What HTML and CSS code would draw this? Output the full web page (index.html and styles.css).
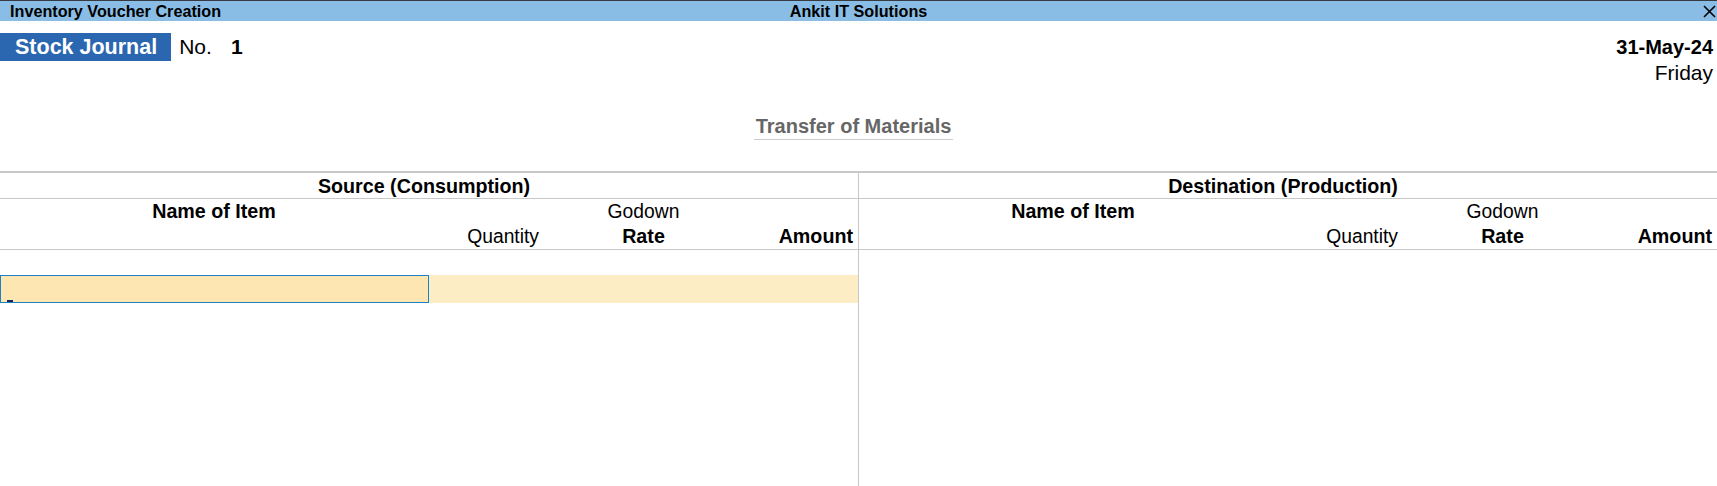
FILE: index.html
```html
<!DOCTYPE html>
<html lang="en">
<head>
    <meta charset="UTF-8">
    <meta name="viewport" content="width=device-width, initial-scale=1.0">
    <title>Inventory Voucher Creation</title>
    <link rel="stylesheet" href="styles.css">
</head>
<body>
    <div class="title-bar">
        <span class="title-left">Inventory Voucher Creation</span>
        <span class="title-center">Ankit IT Solutions</span>
        <span class="title-right">
            <svg class="close-icon" width="13" height="13" viewBox="0 0 13 13">
                <path d="M1 1L12 12M12 1L1 12" stroke="#000" stroke-width="1.6" fill="none"></path>
            </svg>
        </span>
    </div>

    <div class="voucher-head">
        <div class="voucher-type">
            <span class="badge">Stock Journal</span>
            <span class="voucher-no-label">No.</span>
            <span class="voucher-no">1</span>
        </div>
        <div class="voucher-date">
            <div class="date">31-May-24</div>
            <div class="day">Friday</div>
        </div>
    </div>

    <div class="voucher-title">
        <span>Transfer of Materials</span>
    </div>

    <div class="journal">
        <div class="side">
            <div class="side-title">Source (Consumption)</div>
            <div class="cols">
                <div class="col col-name">Name of Item</div>
                <div class="col col-qty"><br>Quantity</div>
                <div class="col col-rate">Godown<br><b>Rate</b></div>
                <div class="col col-amt"><br><b>Amount</b></div>
            </div>
            <div class="entry-row">
                <div class="entry-name"><span class="cursor"></span></div>
                <div class="entry-rest"></div>
            </div>
        </div>
        <div class="side side-right">
            <div class="side-title">Destination (Production)</div>
            <div class="cols">
                <div class="col col-name">Name of Item</div>
                <div class="col col-qty"><br>Quantity</div>
                <div class="col col-rate">Godown<br><b>Rate</b></div>
                <div class="col col-amt"><br><b>Amount</b></div>
            </div>
        </div>
    </div>
</body>
</html>
```

FILE: styles.css
```css
html, body {
    height: 100%;
}

body {
    font-family: 'Liberation Sans', Arial, sans-serif;
    margin: 0;
    padding: 0;
    color: #000;
    background: #fff;
    display: flex;
    flex-direction: column;
    overflow: hidden;
}

.title-bar {
    display: grid;
    grid-template-columns: 1fr auto 1fr;
    align-items: center;
    height: 20px;
    line-height: 20px;
    background-color: #8abde5;
    border-top: 1px solid #353b40;
    font-size: 16.2px;
    font-weight: bold;
}

.title-left {
    padding-left: 10px;
}

.title-right {
    display: flex;
    justify-content: flex-end;
    padding-right: 1px;
}

.close-icon {
    display: block;
}

.voucher-head {
    display: flex;
    justify-content: space-between;
    align-items: flex-start;
    padding-top: 12px;
}

.voucher-type {
    display: flex;
    align-items: center;
    height: 28px;
    font-size: 21px;
}

.badge {
    background-color: #2b67b1;
    color: #fff;
    font-size: 21.5px;
    font-weight: bold;
    line-height: 28px;
    padding: 0 14px 0 15px;
}

.voucher-no-label {
    margin-left: 8px;
}

.voucher-no {
    margin-left: 19px;
    font-weight: bold;
}

.voucher-date {
    text-align: right;
    padding-top: 2px;
    padding-right: 4px;
}

.date {
    font-size: 20px;
    font-weight: bold;
    line-height: 24px;
}

.day {
    font-size: 21px;
    line-height: 28px;
}

.voucher-title {
    display: flex;
    justify-content: center;
    margin-top: 28px;
    padding-right: 10px;
}

.voucher-title span {
    font-size: 20px;
    font-weight: bold;
    line-height: 22px;
    color: #666;
    padding: 0 2px 2px;
    border-bottom: 1px solid #cccccc;
}

.journal {
    flex: 1;
    margin-top: 31px;
    border-top: 2px solid #c8c8c8;
    display: grid;
    grid-template-columns: 858px 1fr;
}

.side-right {
    border-left: 1px solid #c8c8c8;
}

.side-title {
    text-align: center;
    font-size: 19.7px;
    font-weight: bold;
    line-height: 24px;
    padding: 1px 10px 0 0;
    border-bottom: 1px solid #c8c8c8;
}

.cols {
    display: grid;
    grid-template-columns: 428px 116px 1fr 107px;
    font-size: 19.3px;
    line-height: 25px;
    border-bottom: 1px solid #c8c8c8;
}

.cols b,
.col-name {
    font-size: 19.7px;
    font-weight: bold;
}

.col-name {
    text-align: center;
}

.col-qty {
    text-align: right;
    padding-right: 5px;
}

.col-rate {
    text-align: center;
    padding-right: 8px;
}

.col-amt {
    text-align: right;
    padding-right: 5px;
}

.entry-row {
    display: grid;
    grid-template-columns: 429px 1fr;
    margin-top: 25px;
    height: 28px;
}

.entry-name {
    background-color: #fde6b1;
    border: 1px solid #1b82c4;
    padding: 24px 0 0 6px;
}

.cursor {
    display: block;
    width: 6px;
    height: 2px;
    background-color: #14285a;
}

.entry-rest {
    background-color: #fdedc5;
}
```
